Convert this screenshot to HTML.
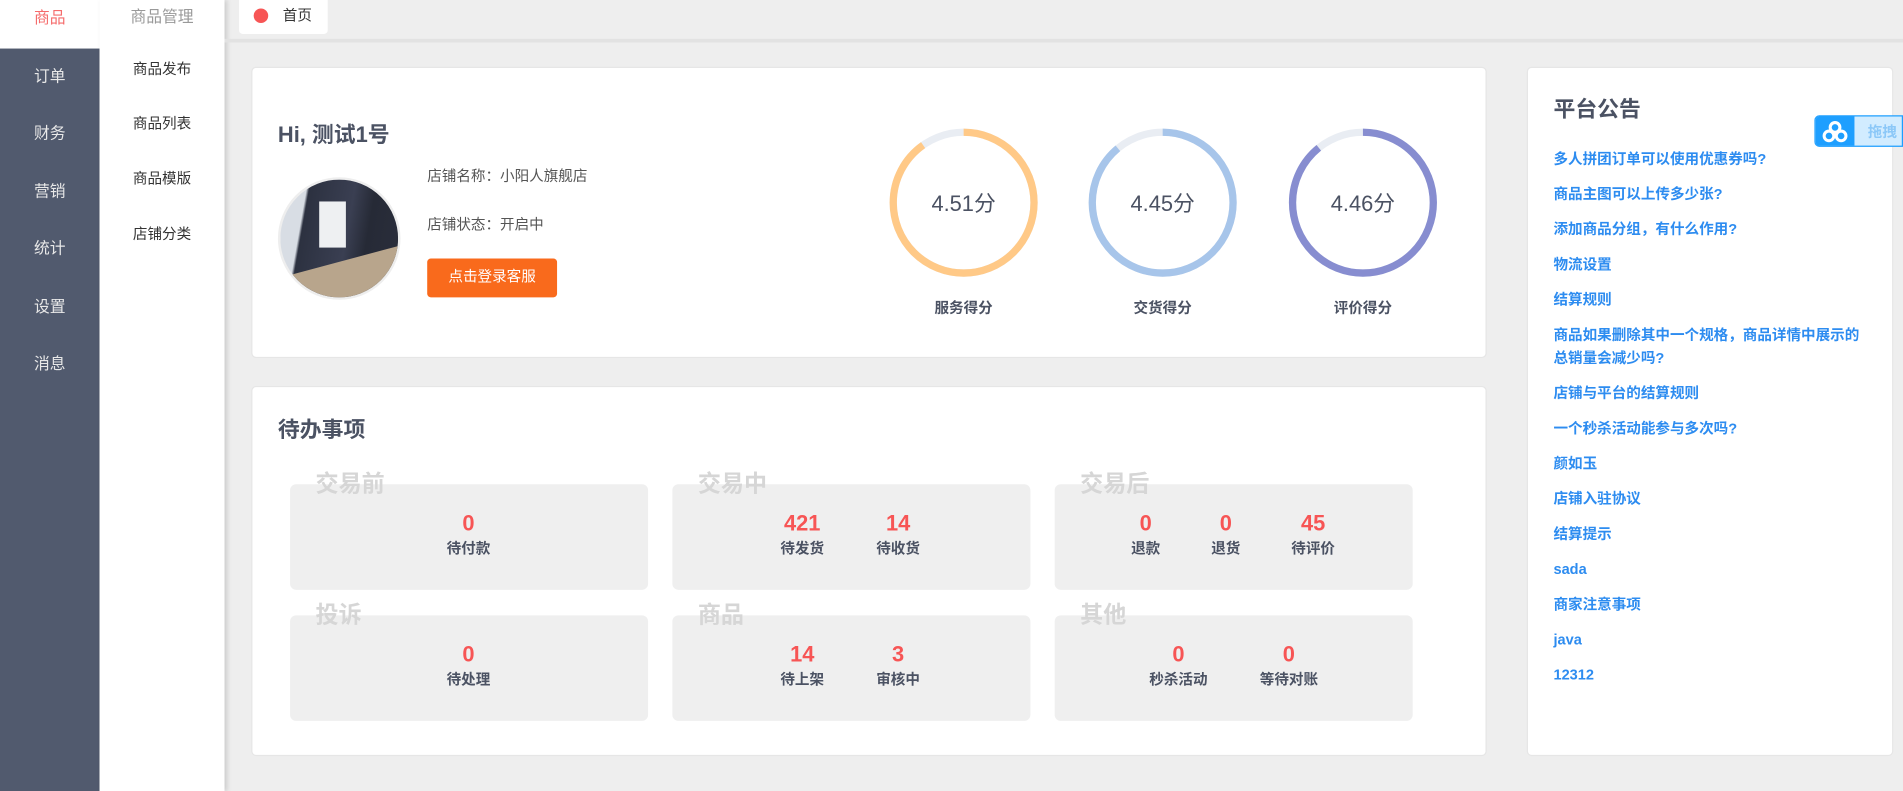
<!DOCTYPE html>
<html><head><meta charset="utf-8"><style>
*{margin:0;padding:0;box-sizing:border-box}
html,body{width:1903px;height:791px;overflow:hidden;background:#eeeeee}
body{font-family:"Liberation Sans","Noto Sans CJK SC",sans-serif}
#w{position:absolute;left:0;top:0;width:1568px;height:652px;transform:scale(1.21365);transform-origin:0 0;background:#eeeeee}
.abs{position:absolute}
.side{left:0;top:0;width:82px;height:652px;background:#515a6e}
.side div{position:absolute;left:0;width:82px;text-align:center;font-size:13px;color:#e8e8e8}
.sub{left:82px;top:0;width:103px;height:652px;background:#fff;box-shadow:2px 0 4px rgba(0,0,0,.15)}
.sub div{position:absolute;left:0;width:103px;text-align:center;font-size:12px;color:#333}
.card{background:#fff;border-radius:4px;border:1px solid #e6e6e6}
.h{font-size:18px;font-weight:bold;color:#4b5263}
.t{font-size:12px;color:#555}
.box{background:#efefef;border-radius:5px;width:295px;height:87px}
.wm{font-size:19px;font-weight:bold;color:#d6d6d6}
.it{position:absolute;top:21px;width:80px;margin-left:-40px;text-align:center}
.it b{display:block;font-size:18px;color:#f75555;line-height:22px}
.it span{display:block;font-size:12px;color:#4b5263;font-weight:bold;margin-top:1px}
.ln{position:absolute;left:21px;font-size:12px;font-weight:bold;color:#2d8cf0;line-height:19px}
.sc{position:absolute;font-size:18px;color:#4b5263;width:120px;text-align:center}
.sl{position:absolute;font-size:12px;font-weight:bold;color:#4b5263;width:120px;text-align:center}
</style></head><body><div id="w">
<div class="abs side">
<div style="top:0;height:40px;background:#fff;color:#f56c6c;line-height:30px">商品</div>
<div style="top:52px">订单</div><div style="top:99px">财务</div><div style="top:147px">营销</div>
<div style="top:194px">统计</div><div style="top:242px">设置</div><div style="top:289px">消息</div>
</div>
<div class="abs sub">
<div style="top:3px;color:#999;font-size:13px">商品管理</div>
<div style="top:48px">商品发布</div><div style="top:93px">商品列表</div><div style="top:138px">商品模版</div><div style="top:184px">店铺分类</div>
</div>
<div class="abs" style="left:185px;top:32px;width:1383px;height:3px;background:#e2e2e2"></div>
<div class="abs" style="left:197px;top:0;width:73px;height:28px;background:#fff;border-radius:0 0 3px 3px">
<div class="abs" style="left:12px;top:7px;width:12px;height:12px;border-radius:50%;background:#f75555"></div>
<div class="abs" style="left:36px;top:4px;font-size:12px;color:#333">首页</div></div>

<div class="abs card" style="left:207px;top:55px;width:1018px;height:240px">
<div class="abs h" style="left:21px;top:41px">Hi, 测试1号</div>
<div class="abs" style="left:21px;top:90px;width:101px;height:101px;border-radius:50%;border:2px solid #eee;overflow:hidden;background:linear-gradient(100deg,#d8dde4 0,#d8dde4 20%,#2c3140 22%,#3a3f52 55%,#262a36 70%,#2a2e3c 100%)">
<div class="abs" style="left:32px;top:18px;width:22px;height:38px;background:#eef0f2"></div>
<div class="abs" style="left:10px;top:66px;width:90px;height:40px;background:#b8a58c;transform:skewY(-15deg)"></div></div>
<div class="abs t" style="left:144px;top:80px">店铺名称：小阳人旗舰店</div>
<div class="abs t" style="left:144px;top:120px">店铺状态：开启中</div>
<div class="abs" style="left:144px;top:157px;width:107px;height:32px;background:#f96a1c;border-radius:3px;color:#fff;font-size:12px;text-align:center;line-height:31px">点击登录客服</div>
<svg class="abs" style="left:520px;top:49px" width="480" height="125">
<g fill="none" stroke-width="6" transform="rotate(-90)">
<circle cx="-62" cy="66" r="58" stroke="#e9edf3"/>
<circle cx="-62" cy="66" r="58" stroke="#ffc987" stroke-dasharray="328.7 364.4"/>
<circle cx="-62" cy="230" r="58" stroke="#e9edf3"/>
<circle cx="-62" cy="230" r="58" stroke="#a7c5ea" stroke-dasharray="324.3 364.4"/>
<circle cx="-62" cy="395" r="58" stroke="#e9edf3"/>
<circle cx="-62" cy="395" r="58" stroke="#878dd0" stroke-dasharray="325 364.4"/>
</g></svg>
<div class="sc" style="left:526px;top:98px">4.51分</div>
<div class="sc" style="left:690px;top:98px">4.45分</div>
<div class="sc" style="left:855px;top:98px">4.46分</div>
<div class="sl" style="left:526px;top:189px">服务得分</div>
<div class="sl" style="left:690px;top:189px">交货得分</div>
<div class="sl" style="left:855px;top:189px">评价得分</div>
</div>

<div class="abs card" style="left:207px;top:318px;width:1018px;height:305px">
<div class="abs h" style="left:21px;top:21px">待办事项</div>
<div class="abs box" style="left:31px;top:80px"><div class="it" style="left:147px"><b>0</b><span>待付款</span></div></div>
<div class="abs box" style="left:346px;top:80px"><div class="it" style="left:107px"><b>421</b><span>待发货</span></div><div class="it" style="left:186px"><b>14</b><span>待收货</span></div></div>
<div class="abs box" style="left:661px;top:80px"><div class="it" style="left:75px"><b>0</b><span>退款</span></div><div class="it" style="left:141px"><b>0</b><span>退货</span></div><div class="it" style="left:213px"><b>45</b><span>待评价</span></div></div>
<div class="abs box" style="left:31px;top:188px"><div class="it" style="left:147px"><b>0</b><span>待处理</span></div></div>
<div class="abs box" style="left:346px;top:188px"><div class="it" style="left:107px"><b>14</b><span>待上架</span></div><div class="it" style="left:186px"><b>3</b><span>审核中</span></div></div>
<div class="abs box" style="left:661px;top:188px"><div class="it" style="left:102px"><b>0</b><span>秒杀活动</span></div><div class="it" style="left:193px"><b>0</b><span>等待对账</span></div></div>
<div class="abs wm" style="left:52px;top:65px">交易前</div>
<div class="abs wm" style="left:367px;top:65px">交易中</div>
<div class="abs wm" style="left:682px;top:65px">交易后</div>
<div class="abs wm" style="left:52px;top:173px">投诉</div>
<div class="abs wm" style="left:367px;top:173px">商品</div>
<div class="abs wm" style="left:682px;top:173px">其他</div>
</div>

<div class="abs card" style="left:1258px;top:55px;width:302px;height:568px">
<div class="abs h" style="left:21px;top:20px">平台公告</div>
<div class="ln" style="top:66px">多人拼团订单可以使用优惠券吗?</div>
<div class="ln" style="top:95px">商品主图可以上传多少张?</div>
<div class="ln" style="top:124px">添加商品分组，有什么作用?</div>
<div class="ln" style="top:153px">物流设置</div>
<div class="ln" style="top:182px">结算规则</div>
<div class="ln" style="top:211px;width:262px">商品如果删除其中一个规格，商品详情中展示的总销量会减少吗?</div>
<div class="ln" style="top:259px">店铺与平台的结算规则</div>
<div class="ln" style="top:288px">一个秒杀活动能参与多次吗?</div>
<div class="ln" style="top:317px">颜如玉</div>
<div class="ln" style="top:346px">店铺入驻协议</div>
<div class="ln" style="top:375px">结算提示</div>
<div class="ln" style="top:404px">sada</div>
<div class="ln" style="top:433px">商家注意事项</div>
<div class="ln" style="top:462px">java</div>
<div class="ln" style="top:491px">12312</div>
</div>

<div class="abs" style="left:1495px;top:95px;width:73px;height:26px;background:#d2ecff;border:1px solid #1e9fff;border-radius:4px 0 0 4px;overflow:hidden">
<div class="abs" style="left:0;top:0;width:32px;height:26px;background:#1e9fff">
<svg width="32" height="26"><g fill="none" stroke="#fff" stroke-width="2.5"><circle cx="16" cy="9" r="4"/><circle cx="11" cy="16" r="4"/><circle cx="21" cy="16" r="4"/></g></svg></div>
<div class="abs" style="left:43px;top:4px;font-size:12px;font-weight:bold;color:#8cc8f8">拖拽_</div>
</div>
</div></body></html>
